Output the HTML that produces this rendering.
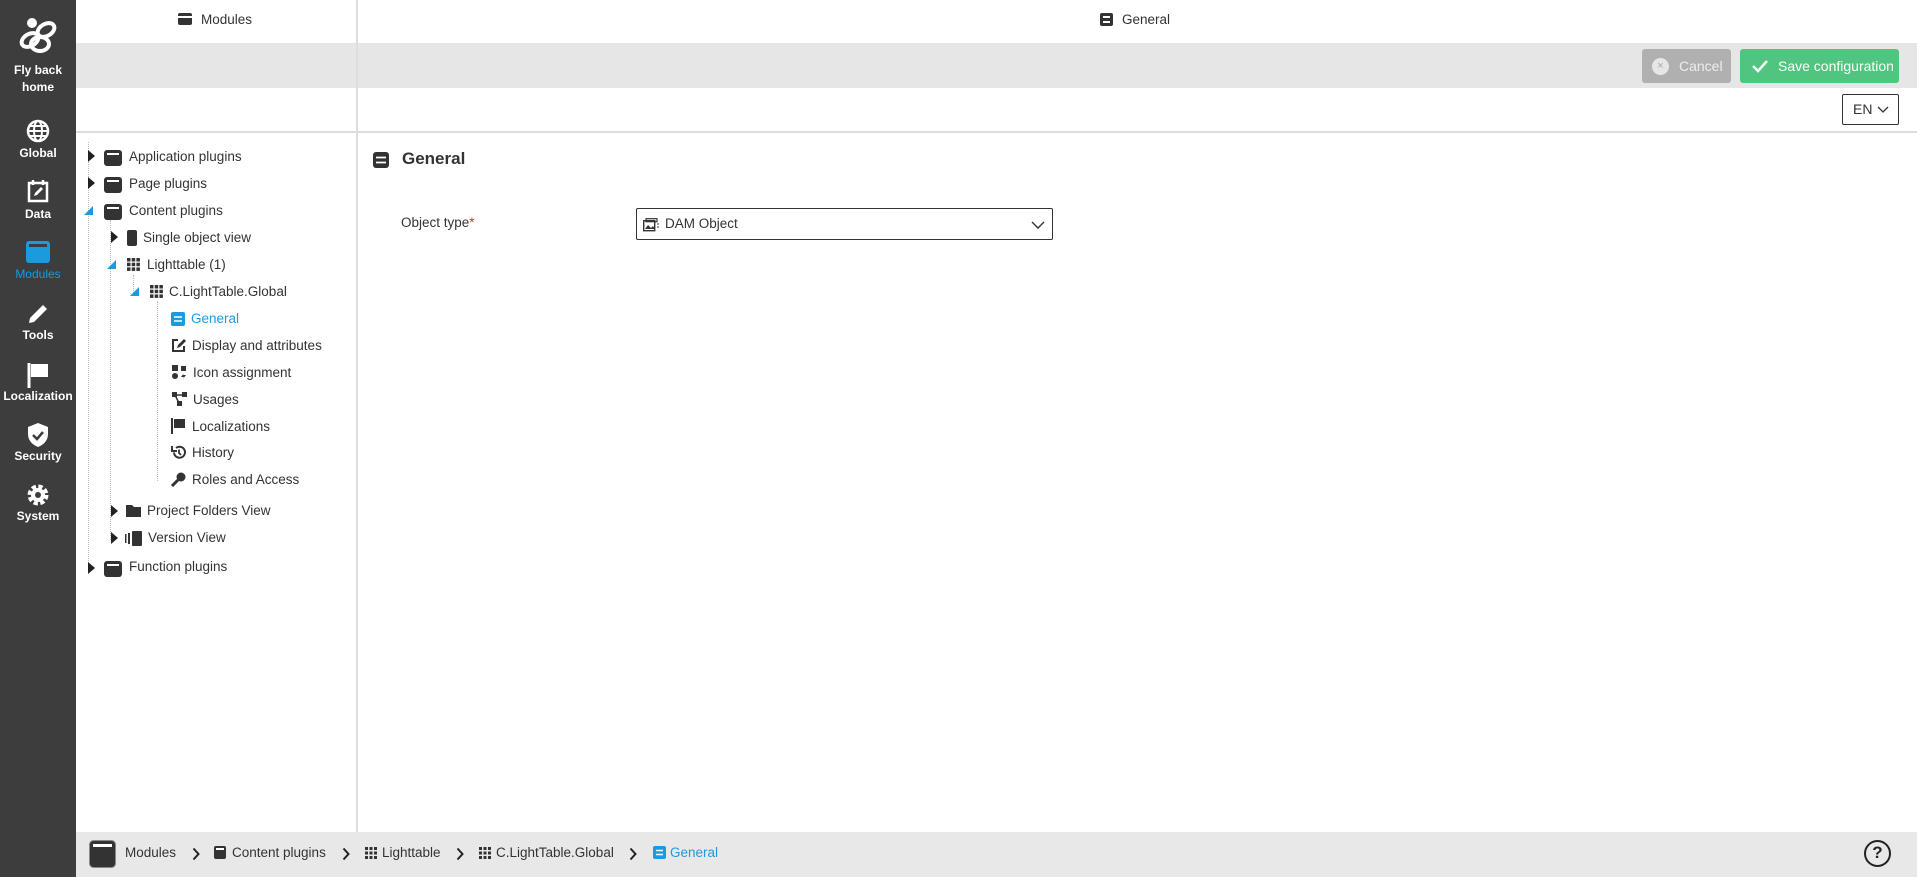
<!DOCTYPE html>
<html><head><meta charset="utf-8"><style>
*{box-sizing:border-box;margin:0;padding:0}
body{width:1917px;height:877px;position:relative;overflow:hidden;font-family:"Liberation Sans",Arial,sans-serif;background:#fff;color:#333}
.abs{position:absolute}
#side{left:0;top:0;width:76px;height:877px;background:#3d3d3d}
.si{position:absolute;left:0;width:76px;text-align:center;color:#fff;font-size:12px;font-weight:bold}
.si svg{display:block;margin:0 auto}
.tr{position:absolute;font-size:13.5px;color:#333;white-space:nowrap;line-height:18px}
.ico{position:absolute}
.arr{position:absolute;width:0;height:0;border-top:6px solid transparent;border-bottom:6px solid transparent;border-left:7px solid #222}
.open{position:absolute;width:0;height:0;border-left:9px solid transparent;border-bottom:9px solid #1a9be0}
.dot{position:absolute;border-left:1px dotted #bbb}
.bc{position:absolute;top:845px;font-size:13.5px;color:#333}
.chev{position:absolute;top:847px}
</style></head><body>
<div id="side" class="abs">
 <div class="si" style="top:14px"><svg width="44" height="42" viewBox="0 0 44 42"><g fill="none" stroke="#fff" stroke-width="4"><ellipse cx="14" cy="26" rx="9" ry="6" transform="rotate(-30 14 26)"/><ellipse cx="30" cy="16" rx="9" ry="6" transform="rotate(-30 30 16)"/><ellipse cx="24" cy="30" rx="9" ry="7"/></g><circle cx="16" cy="9" r="5" fill="#fff"/></svg></div>
 <div class="si" style="top:62px;line-height:17px">Fly back<br>home</div>
 <div class="si" style="top:119px"><svg width="24" height="24" viewBox="0 0 24 24"><circle cx="12" cy="12" r="10" fill="none" stroke="#fff" stroke-width="2.5"/><ellipse cx="12" cy="12" rx="4" ry="10" fill="none" stroke="#fff" stroke-width="2"/><path d="M2 12h20M4 7h16M4 17h16" stroke="#fff" stroke-width="2"/></svg></div>
 <div class="si" style="top:146px">Global</div>
 <div class="si" style="top:179px"><svg width="22" height="24" viewBox="0 0 22 24"><rect x="2" y="4" width="18" height="18" fill="none" stroke="#fff" stroke-width="2.5"/><path d="M6 1v5M16 1v5" stroke="#fff" stroke-width="2.5"/><path d="M7 17l1-3 6-6 2 2-6 6z" fill="#fff"/></svg></div>
 <div class="si" style="top:207px">Data</div>
 <div class="si" style="top:240px"><svg width="26" height="24" viewBox="0 0 26 24"><rect x="1" y="1" width="24" height="22" rx="3" fill="#1a9be0"/><rect x="4" y="4" width="18" height="3" fill="#3d3d3d"/></svg></div>
 <div class="si" style="top:267px;color:#1a9be0;font-weight:normal">Modules</div>
 <div class="si" style="top:302px"><svg width="24" height="24" viewBox="0 0 24 24"><path d="M3 21l1-5L17 3l4 4L8 20z" fill="#fff"/></svg></div>
 <div class="si" style="top:328px">Tools</div>
 <div class="si" style="top:362px"><svg width="24" height="26" viewBox="0 0 24 26"><path d="M3 1v25" stroke="#fff" stroke-width="3"/><path d="M5 2h17v13H5z" fill="#fff"/></svg></div>
 <div class="si" style="top:389px">Localization</div>
 <div class="si" style="top:422px"><svg width="24" height="26" viewBox="0 0 24 26"><path d="M12 1l10 4v7c0 7-5 11-10 13C7 23 2 19 2 12V5z" fill="#fff"/><path d="M7 13l4 4 6-7" stroke="#3d3d3d" stroke-width="2.5" fill="none"/></svg></div>
 <div class="si" style="top:449px">Security</div>
 <div class="si" style="top:482px"><svg width="26" height="26" viewBox="0 0 26 26"><circle cx="13" cy="13" r="8" fill="none" stroke="#fff" stroke-width="5" stroke-dasharray="4 2.3"/><circle cx="13" cy="13" r="7" fill="#fff"/><circle cx="13" cy="13" r="3" fill="#3d3d3d"/></svg></div>
 <div class="si" style="top:509px">System</div>
</div>

<div class="abs" style="left:76px;top:43px;width:1841px;height:45px;background:#e6e6e6"></div>
<div class="abs" style="left:76px;top:131px;width:1841px;height:2px;background:#ddd"></div>
<div class="abs" style="left:356px;top:0;width:2px;height:832px;background:#ddd"></div>
<div class="abs" style="left:178px;top:12px;font-size:13.5px;color:#333"><span style="display:inline-block;width:14px;height:12px;background:#333;border-radius:2px;border-top:3px solid #333;box-shadow:inset 0 2px 0 #fff;vertical-align:-1px;margin-right:9px"></span>Modules</div>
<div class="abs" style="left:1100px;top:12px;font-size:13.5px;color:#333"><span style="display:inline-block;width:13px;height:13px;background:#333;border-radius:2px;vertical-align:-2px;margin-right:9px;position:relative"><i style="position:absolute;left:3px;top:3px;width:7px;height:2px;background:#fff"></i><i style="position:absolute;left:3px;top:8px;width:7px;height:2px;background:#fff"></i></span>General</div>

<div class="abs" style="left:1642px;top:49px;width:89px;height:34px;background:#b0b0b0;border-radius:3px;color:#eee;font-size:14px;line-height:34px"><span style="position:absolute;left:10px;top:9px;width:17px;height:17px;border-radius:50%;background:#e6e6e6;color:#aaa;font-size:11px;line-height:17px;text-align:center">×</span><span style="position:absolute;left:37px">Cancel</span></div>
<div class="abs" style="left:1740px;top:49px;width:159px;height:34px;background:#4fc57f;border-radius:3px;color:#fff;font-size:14px;line-height:34px"><svg class="ico" style="left:11px;top:10px" width="18" height="14" viewBox="0 0 18 14"><path d="M2 7l5 5L16 2" stroke="#fff" stroke-width="2.5" fill="none"/></svg><span style="position:absolute;left:38px">Save configuration</span></div>
<div class="abs" style="left:1842px;top:94px;width:57px;height:31px;border:1px solid #333;border-radius:2px;font-size:14px;line-height:29px;padding-left:10px">EN<svg style="position:absolute;left:34px;top:11px" width="12" height="8" viewBox="0 0 12 8"><path d="M1 1l5 5 5-5" stroke="#333" fill="none" stroke-width="1.3"/></svg></div>

<div class="dot" style="left:88px;top:142px;height:425px"></div>
<div class="dot" style="left:110px;top:220px;height:320px"></div>
<div class="dot" style="left:133px;top:275px;height:20px"></div>
<div class="dot" style="left:157px;top:301px;height:180px"></div>
<div class="arr" style="left:88px;top:150px"></div><svg class="ico" style="left:104px;top:150px" width="18" height="16"><rect width="18" height="16" rx="3" fill="#333"/><rect x="3" y="3" width="12" height="2" fill="#fff"/></svg><div class="tr" style="left:129px;top:148px">Application plugins</div>
<div class="arr" style="left:88px;top:177px"></div><svg class="ico" style="left:104px;top:177px" width="18" height="16"><rect width="18" height="16" rx="3" fill="#333"/><rect x="3" y="3" width="12" height="2" fill="#fff"/></svg><div class="tr" style="left:129px;top:175px">Page plugins</div>
<div class="open" style="left:84px;top:206px"></div><svg class="ico" style="left:104px;top:204px" width="18" height="16"><rect width="18" height="16" rx="3" fill="#333"/><rect x="3" y="3" width="12" height="2" fill="#fff"/></svg><div class="tr" style="left:129px;top:202px">Content plugins</div>
<div class="arr" style="left:111px;top:231px"></div><svg class="ico" style="left:127px;top:230px" width="10" height="16"><rect width="10" height="16" rx="2" fill="#333"/></svg><div class="tr" style="left:143px;top:229px">Single object view</div>
<div class="open" style="left:107px;top:260px"></div><svg class="ico" style="left:127px;top:258px" width="13" height="13"><g fill="#333"><rect x="0" y="0" width="3.5" height="3.5"/><rect x="4.7" y="0" width="3.5" height="3.5"/><rect x="9.4" y="0" width="3.5" height="3.5"/><rect x="0" y="4.7" width="3.5" height="3.5"/><rect x="4.7" y="4.7" width="3.5" height="3.5"/><rect x="9.4" y="4.7" width="3.5" height="3.5"/><rect x="0" y="9.4" width="3.5" height="3.5"/><rect x="4.7" y="9.4" width="3.5" height="3.5"/><rect x="9.4" y="9.4" width="3.5" height="3.5"/></g></svg><div class="tr" style="left:147px;top:256px">Lighttable (1)</div>
<div class="open" style="left:130px;top:287px"></div><svg class="ico" style="left:150px;top:285px" width="13" height="13"><g fill="#333"><rect x="0" y="0" width="3.5" height="3.5"/><rect x="4.7" y="0" width="3.5" height="3.5"/><rect x="9.4" y="0" width="3.5" height="3.5"/><rect x="0" y="4.7" width="3.5" height="3.5"/><rect x="4.7" y="4.7" width="3.5" height="3.5"/><rect x="9.4" y="4.7" width="3.5" height="3.5"/><rect x="0" y="9.4" width="3.5" height="3.5"/><rect x="4.7" y="9.4" width="3.5" height="3.5"/><rect x="9.4" y="9.4" width="3.5" height="3.5"/></g></svg><div class="tr" style="left:169px;top:283px">C.LightTable.Global</div>

<svg class="ico" style="left:171px;top:312px" width="14" height="14"><rect width="14" height="14" rx="2" fill="#1a9be0"/><path d="M3 5h8M3 9h8" stroke="#fff" stroke-width="1.6"/></svg><div class="tr" style="left:191px;top:310px;color:#1a9be0">General</div>
<svg class="ico" style="left:171px;top:338px" width="15" height="15"><path d="M7 2H2v11h11V8" fill="none" stroke="#333" stroke-width="2"/><path d="M6 10l1-3 6-6 2 2-6 6z" fill="#333"/></svg><div class="tr" style="left:192px;top:337px">Display and attributes</div>
<svg class="ico" style="left:172px;top:365px" width="15" height="15"><rect x="0" y="0" width="6" height="6" fill="#333"/><circle cx="3" cy="11" r="3" fill="#333"/><path d="M9 1h5v5h-5zM12 8l-3 4h3l-2 3 4-5h-3z" fill="#333"/></svg><div class="tr" style="left:193px;top:364px">Icon assignment</div>
<svg class="ico" style="left:172px;top:392px" width="15" height="14"><rect x="0" y="0" width="5" height="5" fill="#333"/><rect x="10" y="0" width="5" height="5" fill="#333"/><rect x="5" y="9" width="5" height="5" fill="#333"/><path d="M3 3h9M3 3l4 8" stroke="#333" stroke-width="1.5"/></svg><div class="tr" style="left:193px;top:391px">Usages</div>
<svg class="ico" style="left:171px;top:418px" width="15" height="16"><path d="M1 0v16" stroke="#333" stroke-width="2"/><path d="M3 1h11v9H3z" fill="#333"/></svg><div class="tr" style="left:192px;top:418px">Localizations</div>
<svg class="ico" style="left:171px;top:445px" width="15" height="15"><path d="M3 7.5A5.5 5.5 0 1 0 5 3" fill="none" stroke="#333" stroke-width="2"/><path d="M1 1v5h5" fill="none" stroke="#333" stroke-width="2"/><path d="M8 4.5v3.5l2 2" stroke="#333" stroke-width="1.8" fill="none"/></svg><div class="tr" style="left:192px;top:444px">History</div>
<svg class="ico" style="left:171px;top:472px" width="15" height="15"><circle cx="10" cy="5" r="4.5" fill="#333"/><path d="M7 8L1 14" stroke="#333" stroke-width="3"/></svg><div class="tr" style="left:192px;top:471px">Roles and Access</div>

<div class="arr" style="left:111px;top:505px"></div><svg class="ico" style="left:126px;top:504px" width="15" height="13"><path d="M0 1h6l2 2h7v10H0z" fill="#333"/></svg><div class="tr" style="left:147px;top:502px">Project Folders View</div>
<div class="arr" style="left:111px;top:532px"></div><svg class="ico" style="left:125px;top:531px" width="17" height="15"><rect x="0" y="3" width="1.5" height="9" fill="#333"/><rect x="3" y="2" width="2" height="11" fill="#333"/><rect x="7" y="0" width="10" height="15" rx="1" fill="#333"/></svg><div class="tr" style="left:148px;top:529px">Version View</div>
<div class="arr" style="left:88px;top:562px"></div><svg class="ico" style="left:104px;top:561px" width="18" height="16"><rect width="18" height="16" rx="3" fill="#333"/><rect x="3" y="3" width="12" height="2" fill="#fff"/></svg><div class="tr" style="left:129px;top:558px">Function plugins</div>

<svg class="ico" style="left:373px;top:152px" width="16" height="16"><rect width="16" height="16" rx="3" fill="#333"/><path d="M3 5.5h10M3 10.5h10" stroke="#fff" stroke-width="1.8"/></svg>
<div class="abs" style="left:402px;top:149px;font-size:17px;font-weight:bold;color:#333">General</div>
<div class="abs" style="left:401px;top:215px;font-size:13.5px;color:#333">Object type<span style="color:#d33">*</span></div>
<div class="abs" style="left:636px;top:208px;width:417px;height:32px;border:1px solid #333;border-radius:2px;font-size:13.5px;line-height:30px;padding-left:28px">DAM Object
 <svg style="position:absolute;left:6px;top:9px" width="17" height="14"><rect x="0.7" y="2.7" width="11" height="10" fill="none" stroke="#333" stroke-width="1.4"/><rect x="3" y="0.7" width="11" height="3" fill="none" stroke="#333" stroke-width="1.2"/><path d="M2 11l3-4 3 3 2-2 2 3z" fill="#333"/><path d="M14 6h2M14 9h2" stroke="#333"/></svg>
 <svg style="position:absolute;left:394px;top:12px" width="14" height="8"><path d="M1 1l6 6 6-6" stroke="#333" fill="none" stroke-width="1.4"/></svg></div>

<div class="abs" style="left:76px;top:832px;width:1841px;height:45px;background:#e8e8e8"></div>
<svg class="ico" style="left:89px;top:840px" width="27" height="28"><rect x="0.5" y="0.5" width="26" height="27" rx="4" fill="#333" stroke="#888"/><rect x="4" y="4" width="19" height="3" fill="#fff"/></svg>
<div class="bc" style="left:125px">Modules</div>
<svg class="chev" style="left:192px" width="8" height="14"><path d="M1.5 1.5l5 5.5-5 5.5" stroke="#222" stroke-width="2" fill="none"/></svg>
<svg class="ico" style="left:214px;top:846px" width="12" height="13"><rect width="12" height="13" rx="2" fill="#333"/><rect x="2" y="2" width="8" height="2" fill="#fff"/></svg>
<div class="bc" style="left:232px">Content plugins</div>
<svg class="chev" style="left:342px" width="8" height="14"><path d="M1.5 1.5l5 5.5-5 5.5" stroke="#222" stroke-width="2" fill="none"/></svg>
<svg class="ico" style="left:365px;top:847px" width="12" height="12"><g fill="#333"><rect x="0" y="0" width="3" height="3"/><rect x="4.5" y="0" width="3" height="3"/><rect x="9" y="0" width="3" height="3"/><rect x="0" y="4.5" width="3" height="3"/><rect x="4.5" y="4.5" width="3" height="3"/><rect x="9" y="4.5" width="3" height="3"/><rect x="0" y="9" width="3" height="3"/><rect x="4.5" y="9" width="3" height="3"/><rect x="9" y="9" width="3" height="3"/></g></svg>
<div class="bc" style="left:382px">Lighttable</div>
<svg class="chev" style="left:456px" width="8" height="14"><path d="M1.5 1.5l5 5.5-5 5.5" stroke="#222" stroke-width="2" fill="none"/></svg>
<svg class="ico" style="left:479px;top:847px" width="12" height="12"><g fill="#333"><rect x="0" y="0" width="3" height="3"/><rect x="4.5" y="0" width="3" height="3"/><rect x="9" y="0" width="3" height="3"/><rect x="0" y="4.5" width="3" height="3"/><rect x="4.5" y="4.5" width="3" height="3"/><rect x="9" y="4.5" width="3" height="3"/><rect x="0" y="9" width="3" height="3"/><rect x="4.5" y="9" width="3" height="3"/><rect x="9" y="9" width="3" height="3"/></g></svg>
<div class="bc" style="left:496px">C.LightTable.Global</div>
<svg class="chev" style="left:629px" width="8" height="14"><path d="M1.5 1.5l5 5.5-5 5.5" stroke="#222" stroke-width="2" fill="none"/></svg>
<svg class="ico" style="left:653px;top:846px" width="13" height="13"><rect width="13" height="13" rx="2" fill="#1a9be0"/><path d="M3 4.5h7M3 8.5h7" stroke="#fff" stroke-width="1.5"/></svg>
<div class="bc" style="left:670px;color:#1a9be0">General</div>
<div class="abs" style="left:1864px;top:840px;width:27px;height:27px;border:2.5px solid #222;border-radius:50%;text-align:center;font-size:17px;font-weight:bold;line-height:22px;color:#222">?</div>
</body></html>
